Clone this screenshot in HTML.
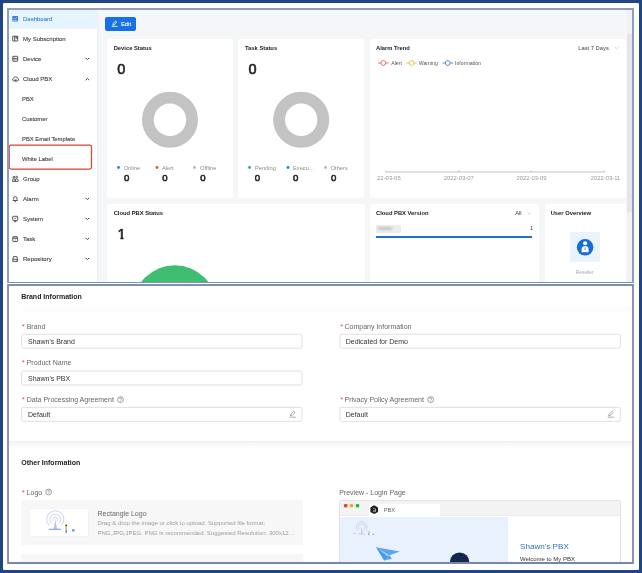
<!DOCTYPE html>
<html><head><meta charset="utf-8">
<style>
*{box-sizing:border-box;margin:0;padding:0}
html,body{width:642px;height:573px;overflow:hidden;background:#1f4680}
body{font-family:"Liberation Sans",Arial,sans-serif;color:#333;position:relative}
#all{position:absolute;left:-20px;top:-20px;width:682px;height:613px;background:#1f4680;filter:blur(0.45px)}
#in{position:absolute;left:20px;top:20px;width:642px;height:573px}
#white{position:absolute;left:3px;top:2.6px;width:636px;height:567.4px;background:#fff;border-radius:1px}
.t{position:absolute;white-space:nowrap;line-height:1}
#p1{position:absolute;left:7px;top:8px;width:627px;height:275px;border:2px solid #919eb9;border-bottom:1.2px solid #8092b0;border-radius:1px;overflow:hidden;background:#f5f6f8}
#p2{position:absolute;left:7px;top:284px;width:627px;height:280px;border:2px solid #8b92b2;border-top-color:#7f8fb0;border-bottom-color:#7787a6;border-radius:1px;overflow:hidden;background:#fff}
.w1{position:absolute;left:-9px;top:-10px;width:642px;height:573px}
.w2{position:absolute;left:-9px;top:-286px;width:642px;height:573px}
svg.ov{position:absolute;left:0;top:0;width:642px;height:573px;overflow:visible}
svg.tx text{font-family:"Liberation Sans",Arial,sans-serif;white-space:pre}
.side{position:absolute;left:9px;top:10px;width:87.5px;height:275px;background:#fff;box-shadow:1px 0 3px rgba(0,0,0,.04)}
.card{position:absolute;background:#fff;border-radius:2px}
.inp{position:absolute;height:15px;border:1px solid #dadada;border-radius:2px;background:#fff}
</style></head><body>
<div id="all"><div id="in">
<div id="white"></div>
<div id="p1"><div class="w1">
  <div class="side"></div>
  <div style="position:absolute;left:9px;top:10px;width:87.5px;height:18.5px;background:#e6f4fd"></div>
  
  
  
  
  
  
  
  
  
  
  
  
  
  

  <div style="position:absolute;left:105.3px;top:17.3px;width:31px;height:13.4px;background:#1771e6;border-radius:2px"></div>
  

  <div class="card" style="left:107px;top:39px;width:126px;height:159px"></div>
  <div class="card" style="left:238.4px;top:39px;width:126.1px;height:159px"></div>
  <div class="card" style="left:369.5px;top:39px;width:256.2px;height:159px"></div>
  <div class="card" style="left:107px;top:203.7px;width:257.5px;height:90px"></div>
  <div class="card" style="left:369.5px;top:203.7px;width:169.5px;height:90px"></div>
  <div class="card" style="left:544.5px;top:203.7px;width:81.5px;height:90px"></div>
  <div style="position:absolute;left:626.8px;top:10px;width:5.4px;height:280px;background:#f1f2f4"></div><div style="position:absolute;left:626.8px;top:34px;width:5.2px;height:178px;background:#e5e6eb;border-radius:1px"></div>

  
  
  
  
  
  
  
  

  
  
  
  
  
  
  
  

  
  
  
  
  
  
  
  
  

  
  

  
  
  <div style="position:absolute;left:376px;top:225px;width:25px;height:7.5px;background:#ededed;border-radius:1px;filter:blur(0.7px)"></div><div style="position:absolute;left:378px;top:227.3px;width:14px;height:3px;background:#c4c4c4;border-radius:1px;filter:blur(1px)"></div>
  
  <div style="position:absolute;left:376px;top:236.2px;width:156px;height:1.6px;background:#1e6fd0"></div>

  
  <div style="position:absolute;left:570.4px;top:232px;width:29.4px;height:30px;background:#eaf4fd"></div>
  

  <svg class="ov" viewBox="0 0 642 573">
    <rect x="9.2" y="145.2" width="82.3" height="23.8" rx="1.8" fill="none" stroke="#d9432f" stroke-width="1.25"/>
    <circle cx="170" cy="119.8" r="22.1" fill="none" stroke="#c3c3c3" stroke-width="11.8"/>
    <circle cx="301.2" cy="119.8" r="22.1" fill="none" stroke="#c3c3c3" stroke-width="11.8"/>
    <circle cx="174.8" cy="307.3" r="42" fill="#3fbe72"/>
    <g><circle cx="118.5" cy="167.5" r="1.45" fill="#2488c4"/><circle cx="157" cy="167.5" r="1.45" fill="#e5534b"/><circle cx="194.5" cy="167.5" r="1.45" fill="#b5b5b5"/>
       <circle cx="249.5" cy="167.5" r="1.45" fill="#2fae78"/><circle cx="288" cy="167.5" r="1.45" fill="#2488c4"/><circle cx="325.5" cy="167.5" r="1.45" fill="#b5b5b5"/></g>
    <path d="M385.7 172H604.500M385.900 172v-1.600M458.800 172v-1.600M531.300 172v-1.600M604.300 172v-1.600" stroke="#9a9a9a" stroke-width=".6" fill="none"/>
    <g fill="#fff" stroke-width=".8">
      <path d="M378 63h10.700" stroke="#e0524a"/><circle cx="383.300" cy="63" r="2.400" stroke="#e0524a"/>
      <path d="M406.200 63h10.700" stroke="#e8b32f"/><circle cx="411.600" cy="63" r="2.400" stroke="#e8b32f"/>
      <path d="M442.500 63h10.700" stroke="#2e72d2"/><circle cx="447.800" cy="63" r="2.400" stroke="#2e72d2"/>
    </g>
    <path d="M614.700 46.700l2 2.500 2-2.500" stroke="#cfcfcf" stroke-width=".65" fill="none"/>
    <path d="M527.300 211.900l2 2.500 2-2.500" stroke="#cfcfcf" stroke-width=".65" fill="none"/>
    <g stroke="#444" stroke-width="1" fill="none">
      <path d="M85.700 57.900l1.700 1.700 1.700-1.700"/>
      <path d="M85.700 80.200l1.700-1.700 1.700 1.700"/>
      <path d="M85.700 197.900l1.700 1.700 1.700-1.700"/>
      <path d="M85.700 217.900l1.700 1.700 1.700-1.700"/>
      <path d="M85.700 237.900l1.700 1.700 1.700-1.700"/>
      <path d="M85.700 257.900l1.700 1.700 1.700-1.700"/>
    </g>
    <g stroke="#fff" stroke-width=".85" fill="none" stroke-linecap="round">
      <path d="M112.900 24.900l.4-1.500 2.400-2.400 1.100 1.100-2.400 2.400z"/><path d="M112.200 26.400h4.800"/>
    </g>
    <g>
      <rect x="12.300" y="16" width="5.800" height="5.600" rx=".8" fill="#3a80d4"/>
      <path d="M13.200 19.300l1.200-1.200 1 .8 1.600-1.600M13.200 20.600h4" stroke="#e6f4fd" stroke-width=".55" fill="none"/>
    </g>
    <g stroke="#444" stroke-width=".9" fill="none">
      <rect x="12.700" y="36.200" width="5" height="4.800" rx=".3"/><path d="M14.700 36.200v4.800M16 36.400v2l.6-.4.600.4v-2"/>
      <rect x="12.800" y="56.300" width="4.900" height="4.900" rx=".2"/><path d="M12.800 58.750h4.900" stroke-width="1.100"/><path d="M13.900 57.500h.9M13.900 60.100h.9" stroke-width=".5"/>
      <path d="M14 81a1.450 1.450 0 0 1-.3-2.850 2 2 0 0 1 3.800 0 1.450 1.450 0 0 1-.3 2.850z"/><path d="M14.600 79.700h2l-1 1.500z" fill="#444" stroke-width=".4"/>
      <circle cx="13.900" cy="177.200" r=".9"/><circle cx="16.600" cy="177.200" r=".9"/><path d="M12.500 181.400v-1.100a1.400 1.400 0 0 1 2.800 0v1.100zM15.300 181.400v-1.100a1.400 1.400 0 0 1 2.800 0v1.100z"/>
      <path d="M13 200.500c.7-.6.600-1.400.6-2.200a1.700 1.700 0 0 1 3.400 0c0 .8-.1 1.600.6 2.200zM14.600 201.700h1.400"/>
      <rect x="12.700" y="216.300" width="5" height="4.200" rx=".6"/><path d="M14 221.700h2.400"/><path d="M14.100 218.200l.8.800 1.400-1.400" stroke-width=".7"/>
      <rect x="12.800" y="236.800" width="4.800" height="4.700" rx=".6"/><path d="M12.800 238.300h4.800M14.100 236v1.200M16.300 236v1.200"/><path d="M14.700 240h1" stroke-width=".7"/>
      <path d="M12.800 259.300l.7-2.700h3.400l.7 2.700v2.100h-4.800zM12.800 259.300h4.800"/><path d="M16.100 260.400h.6" stroke-width=".6"/>
    </g>
    <circle cx="585.100" cy="247.300" r="8.300" fill="#186cd6"/>
    <circle cx="585.100" cy="243.300" r="2.050" fill="#fff"/>
    <path d="M581.600 252.200v-2.800a3.500 3.500 0 0 1 7 0v2.800z" fill="#fff"/>
    <path d="M584.600 246.600h1l.35 2.900-.85 1-.85-1z" fill="#9cc0ec"/>
  </svg>
  <svg class="ov tx" viewBox="0 0 642 573"><defs><clipPath id="c1"><rect x="110" y="220" width="30" height="16.5"/><rect x="120.5" y="236.4" width="2.9" height="4"/></clipPath></defs><text x="23" y="21" font-size="6" fill="#2f7ad0" stroke="#2f7ad0" stroke-width="0.05">Dashboard</text><text x="23" y="41" font-size="6" fill="#444" stroke="#444" stroke-width="0.12">My Subscription</text><text x="23" y="61" font-size="6" fill="#444" stroke="#444" stroke-width="0.12">Device</text><text x="23" y="81" font-size="6" fill="#444" stroke="#444" stroke-width="0.12">Cloud PBX</text><text x="22" y="101" font-size="5.85" fill="#444" stroke="#444" stroke-width="0.12">PBX</text><text x="22" y="121" font-size="5.85" fill="#444" stroke="#444" stroke-width="0.12">Customer</text><text x="22" y="141" font-size="5.85" fill="#444" stroke="#444" stroke-width="0.12">PBX Email Template</text><text x="22" y="161" font-size="5.85" fill="#444" stroke="#444" stroke-width="0.12">White Label</text><text x="23" y="181" font-size="6" fill="#444" stroke="#444" stroke-width="0.12">Group</text><text x="23" y="201" font-size="6" fill="#444" stroke="#444" stroke-width="0.12">Alarm</text><text x="23" y="221" font-size="6" fill="#444" stroke="#444" stroke-width="0.12">System</text><text x="23" y="241" font-size="6" fill="#444" stroke="#444" stroke-width="0.12">Task</text><text x="23" y="261" font-size="6" fill="#444" stroke="#444" stroke-width="0.12">Repository</text><text x="120.9" y="26" font-size="5.9" fill="#fff" stroke="#fff" stroke-width="0.1">Edit</text><text x="113.7" y="50" font-size="5.8" fill="#222" font-weight="bold">Device Status</text><text x="117.3" y="74" font-size="14.5" fill="#222" stroke="#222" stroke-width="0.6">0</text><text x="123.7" y="170" font-size="5.7" fill="#8c8c8c">Online</text><text x="162" y="170" font-size="5.7" fill="#8c8c8c">Alert</text><text x="200" y="170" font-size="5.7" fill="#8c8c8c">Offline</text><text x="124" y="181" font-size="9.6" fill="#222" stroke="#222" stroke-width="0.55">0</text><text x="162.3" y="181" font-size="9.6" fill="#222" stroke="#222" stroke-width="0.55">0</text><text x="200.3" y="181" font-size="9.6" fill="#222" stroke="#222" stroke-width="0.55">0</text><text x="245" y="50" font-size="5.8" fill="#222" font-weight="bold">Task Status</text><text x="248.4" y="74" font-size="14.5" fill="#222" stroke="#222" stroke-width="0.6">0</text><text x="255" y="170" font-size="5.7" fill="#8c8c8c">Pending</text><text x="293" y="170" font-size="5.7" fill="#8c8c8c">Execu…</text><text x="330.7" y="170" font-size="5.7" fill="#8c8c8c">Others</text><text x="254.8" y="181" font-size="9.6" fill="#222" stroke="#222" stroke-width="0.55">0</text><text x="293.1" y="181" font-size="9.6" fill="#222" stroke="#222" stroke-width="0.55">0</text><text x="331" y="181" font-size="9.6" fill="#222" stroke="#222" stroke-width="0.55">0</text><text x="376" y="50" font-size="5.8" fill="#222" font-weight="bold">Alarm Trend</text><text x="578.2" y="50" font-size="5.8" fill="#444">Last 7 Days</text><text x="391.2" y="65" font-size="5.2" fill="#555">Alert</text><text x="418.7" y="65" font-size="5.2" fill="#555">Warning</text><text x="455" y="65" font-size="5.2" fill="#555">Information</text><text x="377.1" y="180" font-size="5.9" fill="#999">22-03-05</text><text x="443.7" y="180" font-size="5.9" fill="#999">2022-03-07</text><text x="516.5" y="180" font-size="5.9" fill="#999">2022-03-09</text><text x="590.7" y="180" font-size="5.9" fill="#999">2022-03-11</text><text x="113.7" y="215" font-size="5.8" fill="#222" font-weight="bold">Cloud PBX Status</text><text x="117.5" y="239" font-size="14.5" fill="#222" stroke="#222" stroke-width="0.6" clip-path="url(#c1)">1</text><text x="376" y="215" font-size="5.8" fill="#222" font-weight="bold">Cloud PBX Version</text><text x="515.2" y="215" font-size="5.8" fill="#444">All</text><text x="530" y="230" font-size="5.6" fill="#444">1</text><text x="550.7" y="215" font-size="5.8" fill="#222" font-weight="bold">User Overview</text><text x="575.8" y="274" font-size="4.85" fill="#aaa">Reseller</text></svg>
</div></div>

<div id="p2"><div class="w2">
  <svg class="ov" viewBox="0 0 642 573"><g stroke="#dcdcdc" stroke-width=".9" fill="#fff"><rect x="21.7" y="334.25" width="280.3" height="14" rx="1.8"/><rect x="21.7" y="371" width="280.3" height="14" rx="1.8"/><rect x="21.7" y="407.4" width="280.3" height="14" rx="1.8"/><rect x="340" y="334.25" width="280.3" height="14" rx="1.8"/><rect x="340" y="407.4" width="280.3" height="14" rx="1.8"/></g></svg>
  <div style="position:absolute;left:22px;top:307px;width:611px;height:5px;background:linear-gradient(#fafafb,#fff)"></div>
  
  
  
  
  
  
  

  
  
  
  

  <div style="position:absolute;left:9px;top:440.500px;width:624px;height:8px;background:linear-gradient(#f0f1f4,#fff)"></div>
  
  
  <div style="position:absolute;left:21.400px;top:500px;width:281.500px;height:45px;background:#f7f7f7"></div>
  <div style="position:absolute;left:29.600px;top:508.500px;width:58.600px;height:27.400px;background:#fff;box-shadow:0 0 1px rgba(0,0,0,.18);border-radius:1px"></div>
  
  
  
  <div style="position:absolute;left:21.400px;top:553.500px;width:281.500px;height:20px;background:#f7f7f7"></div>

  
  <div style="position:absolute;left:339px;top:499.500px;width:282px;height:80px;border:1px solid #e2e2e2;background:#fff;border-radius:2px 2px 0 0;overflow:hidden">
    <div style="position:absolute;left:0;top:0;width:281px;height:15.500px;background:#f3f3f3;border-bottom:1px solid #ececec"></div>
    <div style="position:absolute;left:28.500px;top:3.500px;width:71px;height:12px;background:#fff"></div>
    <div style="position:absolute;left:0;top:16px;width:168px;height:70px;background:#e9f1fc"></div>
  </div>
  
  
  

  <svg class="ov" viewBox="0 0 642 573">
        <g stroke="#6a6a6a" stroke-width=".65" fill="none">
      <circle cx="120.500" cy="399.600" r="2.900"/><circle cx="430.700" cy="399.600" r="2.900"/><circle cx="48.600" cy="492" r="2.900"/>
      <path d="M119.600 398.900a.9.900 0 1 1 1.300.8c-.3.200-.4.300-.4.700M120.500 401.100v.3"/>
      <path d="M429.800 398.900a.9.900 0 1 1 1.300.8c-.3.200-.4.300-.4.700M430.700 401.100v.3"/>
      <path d="M47.700 491.300a.9.900 0 1 1 1.300.8c-.3.200-.4.300-.4.700M48.600 493.500v.3"/>
    </g>
    <g stroke="#888" stroke-width=".7" fill="none" stroke-linejoin="round">
      <path d="M290.400 415.900l.5-1.800 2.900-2.900 1.300 1.300-2.900 2.900zM289.500 417.200h6.400"/>
      <path d="M608.600 415.900l.5-1.800 2.900-2.900 1.300 1.300-2.900 2.900zM607.700 417.200h6.400"/>
    </g>
    <g fill="none" stroke="#b1afee" stroke-width=".6">
      <path d="M49.300 525.500a8.600 8.600 0 1 1 12 0"/><path d="M51.700 523.500a5.300 5.300 0 1 1 7.200 0"/><path d="M53.600 521.300a2.400 2.400 0 1 1 3.400 0"/>
    </g>
    <path d="M55.300 519l1.800 10h-3.600z" fill="#b9c6f3"/><path d="M49 529.300h12" stroke="#6f9be8" stroke-width="1"/>
    <circle cx="66.200" cy="525.400" r=".9" fill="#333"/><rect x="65.300" y="526.300" width="1.800" height="3.400" fill="#f1c232"/><rect x="65.500" y="529.700" width="1.400" height="3.300" fill="#5b8def"/>
    <rect x="72" y="529" width="2.600" height="2.600" fill="#7aa6ee"/>
    <circle cx="345.700" cy="505.700" r="1.900" fill="#e0443e"/><circle cx="351.500" cy="505.700" r="1.900" fill="#e8a92a"/><circle cx="357.500" cy="505.700" r="1.900" fill="#2fb544"/>
    <path d="M374.200 505.300l3.800 2.200v4.400l-3.800 2.200-3.800-2.200v-4.400z" fill="#1a1a1a"/>
    <path d="M373.200 508.600c1.200-.8 2.400-.3 2.400.8v2.200M375.600 510.300c-1.400-.2-2.400.2-2.400.9s1.600.9 2.400-.2" stroke="#fff" stroke-width=".6" fill="none"/>
    <g fill="none" stroke="#b3b6ee" stroke-width=".5">
      <path d="M357.900 530.800a5.400 5.400 0 1 1 7.600 0"/><path d="M359.400 529.500a3.300 3.300 0 1 1 4.600 0"/>
    </g>
    <path d="M361.700 527l1.100 6.300h-2.200z" fill="#c3cef5"/><path d="M353 533.500h3M358 534h7" stroke="#9bb9ef" stroke-width=".6"/>
    <rect x="368.300" y="531" width="1.200" height="2.200" fill="#f1c232"/><rect x="368.400" y="533.200" width="1" height="2" fill="#5b8def"/><rect x="372.500" y="533.500" width="1.600" height="1.600" fill="#9bb9ef"/>
    <path d="M376.100 547.200L399.900 551.500 389.500 555.200 392 558.800 384.300 560.600z" fill="#58a6f1"/><path d="M376.100 547.200L389.500 555.200 387.200 556.300z" fill="#a9d2f9"/><path d="M376.100 547.200L387.200 556.300 384.300 560.600z" fill="#4a9aec"/>
    <circle cx="459.600" cy="562.200" r="9.800" fill="#15254f"/>
  </svg>
  <svg class="ov tx" viewBox="0 0 642 573"><defs><clipPath id="c1"><rect x="110" y="220" width="30" height="16.5"/><rect x="120.5" y="236.4" width="2.9" height="4"/></clipPath></defs><text x="21.2" y="299" font-size="7" fill="#222" font-weight="bold">Brand Information</text><text x="21.7" y="329" font-size="8" fill="#e8555a">*</text><text x="26.7" y="329" font-size="7" fill="#666">Brand</text><text x="28" y="344" font-size="7" fill="#333">Shawn's Brand</text><text x="21.7" y="365" font-size="8" fill="#e8555a">*</text><text x="26.7" y="365" font-size="7" fill="#666">Product Name</text><text x="28" y="381" font-size="7" fill="#333">Shawn's PBX</text><text x="21.7" y="402" font-size="8" fill="#e8555a">*</text><text x="26.7" y="402" font-size="7" fill="#666">Data Processing Agreement</text><text x="28" y="417" font-size="7" fill="#333">Default</text><text x="340.2" y="329" font-size="8" fill="#e8555a">*</text><text x="344.5" y="329" font-size="7" fill="#666">Company Information</text><text x="345.7" y="344" font-size="7" fill="#333">Dedicated for Demo</text><text x="340.2" y="402" font-size="8" fill="#e8555a">*</text><text x="344.5" y="402" font-size="7" fill="#666">Privacy Policy Agreement</text><text x="345.7" y="417" font-size="7" fill="#333">Default</text><text x="21.2" y="465" font-size="7" fill="#222" font-weight="bold">Other Information</text><text x="21.7" y="495" font-size="8" fill="#e8555a">*</text><text x="26.7" y="495" font-size="7" fill="#666">Logo</text><text x="97.5" y="516" font-size="7" fill="#666">Rectangle Logo</text><text x="97.5" y="525" font-size="6" fill="#9c9c9c">Drag &amp; drop the image or click to upload. Supported file format:</text><text x="97.5" y="535" font-size="6" fill="#9c9c9c">PNG,JPG,JPEG. PNG is recommended. Suggested Resolution: 300x12…</text><text x="339.2" y="495" font-size="7" fill="#666">Preview - Login Page</text><text x="383.7" y="512" font-size="5.7" fill="#666">PBX</text><text x="520" y="549" font-size="8.1" fill="#2f6fc4">Shawn's PBX</text><text x="520" y="561" font-size="6" fill="#333">Welcome to My PBX</text></svg>
</div></div>
</div></div>
</body></html>
